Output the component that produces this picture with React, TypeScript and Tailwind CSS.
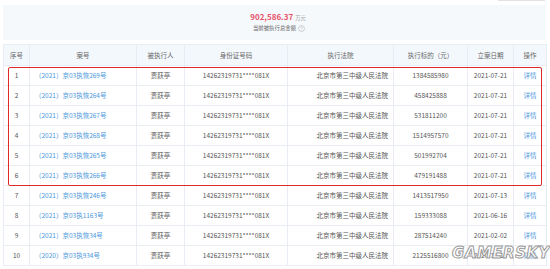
import React from "react";

interface Row {
    no: number;
    caseNo: string;
    amount: string;
    date: string;
}

const rows: Row[] = [
    { no: 1, caseNo: "（2021）京03执恢269号", amount: "1384585980", date: "2021-07-21" },
    { no: 2, caseNo: "（2021）京03执恢264号", amount: "458425888", date: "2021-07-21" },
    { no: 3, caseNo: "（2021）京03执恢267号", amount: "531811200", date: "2021-07-21" },
    { no: 4, caseNo: "（2021）京03执恢268号", amount: "1514957570", date: "2021-07-21" },
    { no: 5, caseNo: "（2021）京03执恢265号", amount: "501992704", date: "2021-07-21" },
    { no: 6, caseNo: "（2021）京03执恢266号", amount: "479191488", date: "2021-07-21" },
    { no: 7, caseNo: "（2021）京03执恢246号", amount: "1413517950", date: "2021-07-13" },
    { no: 8, caseNo: "（2021）京03执1163号", amount: "159333088", date: "2021-06-16" },
    { no: 9, caseNo: "（2021）京03执恢34号", amount: "287514240", date: "2021-02-02" },
    { no: 10, caseNo: "（2020）京03执934号", amount: "2125516800", date: "2020-11-18" },
];

const cell = "border border-[#e7edf2] px-[5px] h-[20px] leading-none";

const App: React.FC = () => {
    return (
        <div className="relative w-[550px] h-[269px] bg-white overflow-hidden font-['Noto_Sans_CJK_SC',sans-serif] text-[6.5px] text-[#555]">
            {/* 右上角按钮（截断） */}
            <div className="flex justify-end pr-[5px] h-[5px]">
                <div className="w-[47px] h-[1px] bg-[#e3e3e3]" />
            </div>

            {/* 汇总 */}
            <div className="mx-[3px] w-[542px] h-[35px] bg-[#f5f9fc] flex flex-col items-center justify-center gap-[4px]">
                <div className="flex items-baseline gap-[2px] pl-[8px]">
                    <span className="text-[8px] font-bold text-[#e7546b] leading-none">902,586.37</span>
                    <span className="text-[5.3px] text-[#999] leading-none">万元</span>
                </div>
                <div className="flex items-center gap-[1px] pl-[10px] text-[5.4px] text-[#666] leading-none">
                    <span>当前被执行总金额</span>
                    <svg width="7" height="7" viewBox="0 0 14 14" className="ml-[1px]">
                        <circle cx="7" cy="7" r="6" fill="none" stroke="#aaa" strokeWidth="1" />
                        <path d="M5.2 5.5a1.8 1.8 0 1 1 2.6 1.6c-.6.3-.8.6-.8 1.2" fill="none" stroke="#aaa" strokeWidth="1" />
                        <circle cx="7" cy="10.2" r="0.6" fill="#aaa" />
                    </svg>
                </div>
            </div>

            {/* 表格 */}
            <table className="mt-[4px] ml-[3px] w-[543px] table-fixed border-collapse">
                <colgroup>
                    <col className="w-[26px]" />
                    <col className="w-[107px]" />
                    <col className="w-[48px]" />
                    <col className="w-[103px]" />
                    <col className="w-[106px]" />
                    <col className="w-[74px]" />
                    <col className="w-[46px]" />
                    <col className="w-[33px]" />
                </colgroup>
                <thead>
                    <tr className="bg-[#f3f8fc] text-[#666]">
                        <th className={`${cell} h-[21px] font-normal text-center`}>序号</th>
                        <th className={`${cell} h-[21px] font-normal text-center`}>案号</th>
                        <th className={`${cell} h-[21px] font-normal text-center`}>被执行人</th>
                        <th className={`${cell} h-[21px] font-normal text-center`}>身份证号码</th>
                        <th className={`${cell} h-[21px] font-normal text-center`}>执行法院</th>
                        <th className={`${cell} h-[21px] font-normal text-center`}>执行标的（元）</th>
                        <th className={`${cell} h-[21px] font-normal text-center`}>立案日期</th>
                        <th className={`${cell} h-[21px] font-normal text-center`}>操作</th>
                    </tr>
                </thead>
                <tbody>
                    {rows.map((r) => (
                        <tr key={r.no}>
                            <td className={`${cell} text-center`}>{r.no}</td>
                            <td className={`${cell} text-left text-[#4b97dc]`}>{r.caseNo}</td>
                            <td className={`${cell} text-center`}>贾跃亭</td>
                            <td className={`${cell} text-center`}>14262319731****081X</td>
                            <td className={`${cell} text-right`}>北京市第三中级人民法院</td>
                            <td className={`${cell} text-center`}>{r.amount}</td>
                            <td className={`${cell} text-center`}>{r.date}</td>
                            <td className={`${cell} text-center text-[#4b97dc]`}>详情</td>
                        </tr>
                    ))}
                </tbody>
            </table>

            {/* 红框标注 */}
            <div className="absolute left-[8px] top-[67px] w-[534px] h-[119px] border-[1.5px] border-[#e02a2a] rounded-[2px] pointer-events-none" />

            {/* 水印 */}
            <div className="absolute left-[452px] top-[246px] text-[15px] font-black italic tracking-[0.5px] text-white/80 leading-none font-['DejaVu_Sans',sans-serif] [-webkit-text-stroke:1px_#9a9a9a]">
                GAMERSKY
            </div>
        </div>
    );
};

export default App;
